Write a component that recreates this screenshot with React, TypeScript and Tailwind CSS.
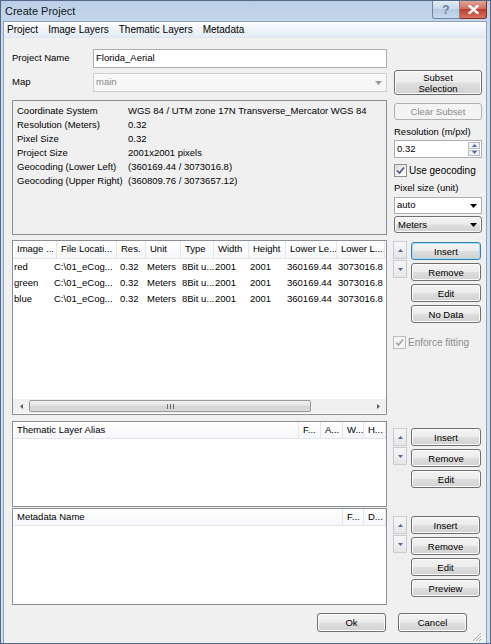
import type { ReactNode } from "react";

const btnBase =
  "flex items-center justify-center rounded-[3px] border text-[9.5px] leading-[11px] text-center";
const btnNormal =
  "border-[#707070] text-black bg-[linear-gradient(to_bottom,#f3f3f3_0%,#ececec_48%,#dedede_52%,#d2d2d2_100%)] shadow-[inset_0_0_0_1px_#fbfbfb]";
const btnFocused =
  "border-[#3c7fb1] text-black bg-[linear-gradient(to_bottom,#f3f3f3_0%,#ececec_48%,#dedede_52%,#d2d2d2_100%)] shadow-[inset_0_0_0_1px_#9fdcf7]";
const btnDisabled = "border-[#adb2b5] bg-[#f4f4f4] text-[#8d8d8d]";

function Btn({
  children,
  className = "",
  focused,
  disabled,
}: {
  children: ReactNode;
  className?: string;
  focused?: boolean;
  disabled?: boolean;
}) {
  const look = disabled ? btnDisabled : focused ? btnFocused : btnNormal;
  return <div className={`${btnBase} ${look} ${className}`}>{children}</div>;
}

function Tri({ down, color = "#4a6ca8" }: { down?: boolean; color?: string }) {
  return (
    <svg width="5" height="3" viewBox="0 0 5 3">
      <path d={down ? "M0 0H5L2.5 3Z" : "M0 3H5L2.5 0Z"} fill={color} />
    </svg>
  );
}

function DropArrow({ color = "#000" }: { color?: string }) {
  return (
    <svg width="7" height="4" viewBox="0 0 7 4">
      <path d="M0 0H7L3.5 4Z" fill={color} />
    </svg>
  );
}

function ArrowPair({ className = "" }: { className?: string }) {
  const cell =
    "flex h-[18px] w-[14px] items-center justify-center border border-[#c8ccd2] bg-[linear-gradient(to_bottom,#f7f7f7,#e6e6e6)]";
  return (
    <div className={`flex flex-col gap-[1px] ${className}`}>
      <div className={cell}>
        <Tri />
      </div>
      <div className={cell}>
        <Tri down />
      </div>
    </div>
  );
}

function Check({ disabled }: { disabled?: boolean }) {
  return (
    <div
      className={`flex h-[13px] w-[13px] items-center justify-center border ${
        disabled ? "border-[#bcbcbc] bg-[#f4f4f4]" : "border-[#8f8f8f] bg-[linear-gradient(135deg,#dcdcdc,#ffffff)]"
      }`}
    >
      <svg width="9" height="9" viewBox="0 0 9 9">
        <path
          d="M1 4.5L3.5 7L8 1.5"
          fill="none"
          stroke={disabled ? "#a8a8a8" : "#4a5a8a"}
          strokeWidth="1.7"
        />
      </svg>
    </div>
  );
}

type Col = { h: string; w: number; shift?: number };

const imgCols: Col[] = [
  { h: "Image ...", w: 44 },
  { h: "File Locati...", w: 60, shift: -4 },
  { h: "Res.", w: 29, shift: 2 },
  { h: "Unit", w: 35 },
  { h: "Type", w: 33 },
  { h: "Width", w: 35 },
  { h: "Height", w: 37 },
  { h: "Lower Le...", w: 51 },
  { h: "Lower L...", w: 48 },
];

const imgRows = ["red", "green", "blue"].map((n) => [
  n,
  "C:\\01_eCog...",
  "0.32",
  "Meters",
  "8Bit u...",
  "2001",
  "2001",
  "360169.44",
  "3073016.8",
]);

function Header({ cols, h = 18 }: { cols: Col[]; h?: number }) {
  return (
    <div
      className="flex shrink-0 border-b border-[#e3e5e8] bg-[linear-gradient(to_bottom,#ffffff,#f6f7f9)]"
      style={{ height: h }}
    >
      {cols.map((c, i) => (
        <div
          key={i}
          className="flex shrink-0 items-center overflow-hidden whitespace-nowrap border-r border-[#e3e5e8] pl-[4px]"
          style={{ width: c.w }}
        >
          {c.h}
        </div>
      ))}
    </div>
  );
}

const info: [string, string][] = [
  ["Coordinate System", "WGS 84 / UTM zone 17N  Transverse_Mercator  WGS 84"],
  ["Resolution (Meters)", "0.32"],
  ["Pixel Size", "0.32"],
  ["Project Size", "2001x2001 pixels"],
  ["Geocoding (Lower Left)", "(360169.44 / 3073016.8)"],
  ["Geocoding (Upper Right)", "(360809.76 / 3073657.12)"],
];

export default function App() {
  return (
    <div className="flex h-[644px] w-[491px] flex-col overflow-hidden border border-[#52698a] bg-[linear-gradient(to_bottom,#bccfe7,#cddcef_40px,#cfdeef)] font-['Liberation_Sans',Arial,sans-serif] text-[9.5px] text-black">
      {/* title bar */}
      <div className="flex h-[20px] shrink-0 items-start">
        <div className="mt-[3px] pl-[4px] text-[11px] leading-[14px] text-[#101820]">Create Project</div>
        <div className="ml-auto mr-[3px] flex">
          <div className="flex h-[18px] w-[28px] items-center justify-center rounded-bl-[3px] border border-t-0 border-[#6d86a6] bg-[linear-gradient(to_bottom,#e3ebf5,#c7d6ea_50%,#b6c9e1_50%,#c9d9ec)] text-[12px] font-bold text-[#6d7f99]">
            ?
          </div>
          <div className="flex h-[18px] w-[27px] items-center justify-center rounded-br-[3px] border border-l-0 border-t-0 border-[#7a3128] bg-[linear-gradient(to_bottom,#e3a397,#cf6a5a_50%,#bb3f2e_50%,#d4725f)]">
            <svg width="11" height="9" viewBox="0 0 11 9">
              <path d="M1.5 1L9.5 8M9.5 1L1.5 8" stroke="#fff" strokeWidth="2.4" strokeLinecap="square" />
            </svg>
          </div>
        </div>
      </div>

      {/* client */}
      <div className="ml-[2px] mr-[3px] mb-[3px] flex flex-1 flex-col border border-[#8ca1bd]">
        <div className="flex h-[16px] shrink-0 items-center gap-[10px] border-b border-[#dfe6ef] bg-[linear-gradient(to_bottom,#fbfcfe,#e4ebf5)] pl-[3px] text-[10px]">
          <span>Project</span>
          <span>Image Layers</span>
          <span>Thematic Layers</span>
          <span>Metadata</span>
        </div>

        <div className="flex flex-1 flex-col bg-[#f0f0f0] pt-[11px] pl-[8px] pr-[4px]">
          {/* row A */}
          <div className="flex gap-[7px]">
            <div className="flex w-[375px] flex-col">
              <div className="flex h-[19px] items-center">
                <div className="w-[81px]">Project Name</div>
                <div className="flex h-full flex-1 items-center border border-[#abadb3] bg-white pl-[2px]">
                  Florida_Aerial
                </div>
              </div>
              <div className="mt-[5px] flex h-[19px] items-center">
                <div className="w-[81px]">Map</div>
                <div className="flex h-full flex-1 items-center border border-[#d0d0d0] bg-[#f7f7f7] pl-[2px] text-[#8a8a8a]">
                  <span className="flex-1">main</span>
                  <span className="mr-[4px]">
                    <DropArrow color="#9a9a9a" />
                  </span>
                </div>
              </div>
              <div className="mt-[8px] h-[135px] border border-[#8a8f98] pt-[3px] pl-[4px]">
                {info.map(([k, v]) => (
                  <div key={k} className="flex h-[14px] items-center whitespace-nowrap">
                    <div className="w-[111px] shrink-0">{k}</div>
                    <div>{v}</div>
                  </div>
                ))}
              </div>
            </div>

            <div className="flex w-[88px] flex-col">
              <Btn className="mt-[21px] h-[25px]">
                Subset
                <br />
                Selection
              </Btn>
              <Btn disabled className="mt-[8px] h-[17px]">
                Clear Subset
              </Btn>
              <div className="mt-[5px] flex h-[14px] items-center">Resolution (m/pxl)</div>
              <div className="mt-[1px] flex h-[18px] items-center border border-[#abadb3] bg-white pl-[2px]">
                <span className="flex-1">0.32</span>
                <div className="mr-[1px] flex h-[14px] w-[12px] flex-col gap-[1px]">
                  <div className="flex flex-1 items-center justify-center border border-[#b5bcc7] bg-[#eef1f6]">
                    <Tri />
                  </div>
                  <div className="flex flex-1 items-center justify-center border border-[#b5bcc7] bg-[#eef1f6]">
                    <Tri down />
                  </div>
                </div>
              </div>
              <div className="mt-[5px] flex h-[14px] items-center gap-[2px]">
                <Check />
                <span className="text-[10px]">Use geocoding</span>
              </div>
              <div className="mt-[4px] flex h-[14px] items-center">Pixel size (unit)</div>
              <div className="mt-[2px] flex h-[17px] items-center border border-[#abadb3] bg-white pl-[2px]">
                <span className="flex-1">auto</span>
                <span className="mr-[4px]">
                  <DropArrow />
                </span>
              </div>
              <Btn className="mt-[2px] h-[17px] !justify-start pl-[3px]">
                <span className="flex-1 text-left">Meters</span>
                <span className="mr-[4px]">
                  <DropArrow />
                </span>
              </Btn>
            </div>
          </div>

          {/* row B: image layers */}
          <div className="mt-[5px] flex gap-[6px]">
            <div className="flex h-[175px] w-[375px] flex-col border border-[#8a8f98] bg-white">
              <Header cols={imgCols} />
              <div className="flex-1">
                {imgRows.map((r, ri) => (
                  <div key={ri} className="flex h-[16px] items-center">
                    {r.map((cell, ci) => (
                      <div
                        key={ci}
                        className="shrink-0 whitespace-nowrap pl-[1px]"
                        style={{ width: imgCols[ci].w, marginLeft: ci === 0 ? 0 : undefined }}
                      >
                        <span style={{ position: "relative", left: imgCols[ci].shift ?? 0 }}>{cell}</span>
                      </div>
                    ))}
                  </div>
                ))}
              </div>
              <div className="mb-[1px] flex h-[14px] items-center bg-[#f0f0f0] px-[2px]">
                <div className="flex w-[12px] justify-center">
                  <svg width="3" height="5" viewBox="0 0 3 5">
                    <path d="M3 0V5L0 2.5Z" fill="#606060" />
                  </svg>
                </div>
                <div className="ml-[2px] flex h-[12px] w-[282px] items-center justify-center rounded-[2px] border border-[#9a9a9a] bg-[linear-gradient(to_bottom,#f4f4f4,#e0e0e0_50%,#d4d4d4_50%,#dadada)]">
                  <svg width="7" height="5" viewBox="0 0 7 5">
                    <path d="M0.5 0V5M3.5 0V5M6.5 0V5" stroke="#6a6a6a" strokeWidth="1" />
                  </svg>
                </div>
                <div className="ml-auto flex w-[12px] justify-center">
                  <svg width="3" height="5" viewBox="0 0 3 5">
                    <path d="M0 0V5L3 2.5Z" fill="#606060" />
                  </svg>
                </div>
              </div>
            </div>
            <div className="flex w-[89px] flex-col">
              <div className="flex gap-[4px]">
                <ArrowPair className="mt-[1px]" />
                <div className="mt-[2px] flex w-[70px] flex-col gap-[3px]">
                  <Btn focused className="h-[18px]">Insert</Btn>
                  <Btn className="h-[18px]">Remove</Btn>
                  <Btn className="h-[18px]">Edit</Btn>
                  <Btn className="h-[18px]">No Data</Btn>
                </div>
              </div>
              <div className="mt-[12px] flex h-[14px] items-center gap-[2px] text-[#8d8d8d]">
                <Check disabled />
                <span className="text-[10px]">Enforce fitting</span>
              </div>
            </div>
          </div>

          {/* row C: thematic layers */}
          <div className="mt-[6px] flex gap-[6px]">
            <div className="flex h-[86px] w-[375px] flex-col border border-[#8a8f98] bg-white">
              <Header
                h={17}
                cols={[
                  { h: "Thematic Layer Alias", w: 286 },
                  { h: "F...", w: 22 },
                  { h: "A...", w: 22 },
                  { h: "W...", w: 21 },
                  { h: "H...", w: 22 },
                ]}
              />
            </div>
            <div className="mt-[7px] flex w-[89px] gap-[4px]">
              <ArrowPair />
              <div className="flex w-[70px] flex-col gap-[3px]">
                <Btn className="h-[18px]">Insert</Btn>
                <Btn className="h-[18px]">Remove</Btn>
                <Btn className="h-[18px]">Edit</Btn>
              </div>
            </div>
          </div>

          {/* row D: metadata */}
          <div className="mt-[1px] flex gap-[6px]">
            <div className="flex h-[97px] w-[375px] flex-col border border-[#8a8f98] bg-white">
              <Header
                h={17}
                cols={[
                  { h: "Metadata Name", w: 330 },
                  { h: "F...", w: 21 },
                  { h: "D...", w: 22 },
                ]}
              />
            </div>
            <div className="mt-[8px] flex w-[89px] gap-[4px]">
              <ArrowPair />
              <div className="flex w-[69px] flex-col gap-[3px]">
                <Btn className="h-[18px]">Insert</Btn>
                <Btn className="h-[18px]">Remove</Btn>
                <Btn className="h-[18px]">Edit</Btn>
                <Btn className="h-[18px]">Preview</Btn>
              </div>
            </div>
          </div>

          {/* row E */}
          <div className="mt-[8px] flex justify-end gap-[12px] pr-[15px]">
            <Btn className="h-[19px] w-[69px]">Ok</Btn>
            <Btn className="h-[19px] w-[69px]">Cancel</Btn>
          </div>
          <div className="mt-auto flex justify-end pb-[1px]">
            <svg width="10" height="10" viewBox="0 0 10 10">
              <path d="M9 1L1 9M9 4L4 9M9 7L7 9" stroke="#a9a9a9" strokeWidth="1" />
            </svg>
          </div>
        </div>
      </div>
    </div>
  );
}
